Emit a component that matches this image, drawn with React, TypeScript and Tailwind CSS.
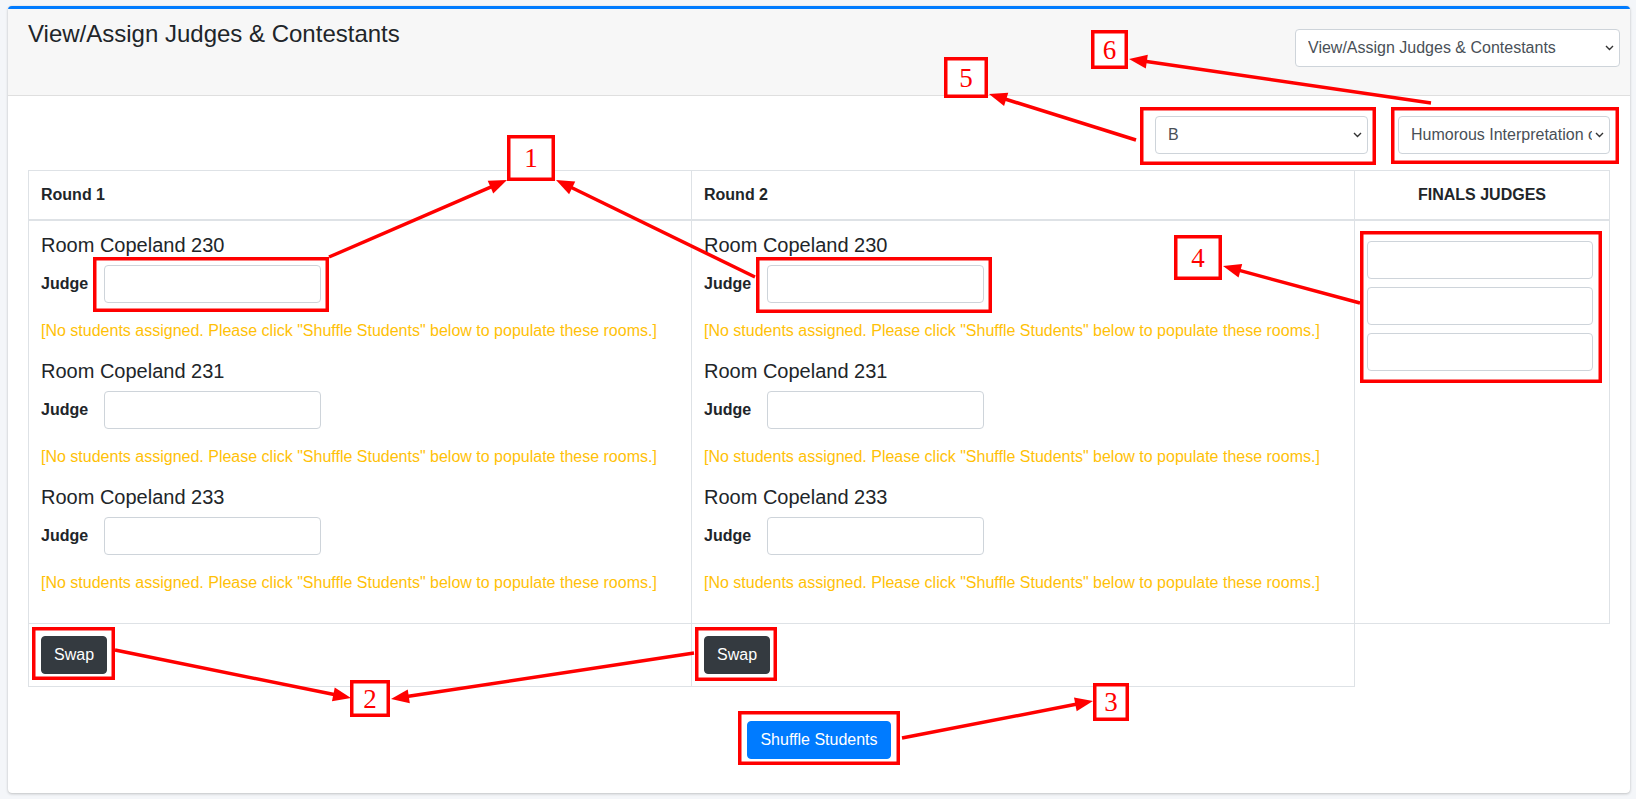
const rooms = ["Room Copeland 230", "Room Copeland 231", "Room Copeland 233"];
const rounds = ["Round 1", "Round 2"];

const warning =
  '[No students assigned. Please click "Shuffle Students" below to populate these rooms.]';

// red call-out overlay, coordinates are outer edges in page pixels
const highlights = [
  [93, 257, 329, 312],
  [756, 257, 992, 313],
  [1360, 231, 1602, 383],
  [1140, 107, 1376, 165],
  [1391, 107, 1619, 164],
  [32, 627, 115, 680],
  [695, 627, 777, 681],
  [738, 711, 900, 765],
];

const labels = [
  { n: "1", box: [507, 135, 555, 181] },
  { n: "2", box: [350, 680, 390, 717] },
  { n: "3", box: [1093, 683, 1129, 721] },
  { n: "4", box: [1174, 235, 1222, 280] },
  { n: "5", box: [944, 57, 988, 98] },
  { n: "6", box: [1091, 30, 1128, 69] },
];

const arrows = [
  { s: [329, 257], t: [507, 180] },
  { s: [755, 277], t: [556, 180] },
  { s: [1360, 303], t: [1223, 266] },
  { s: [1136, 140], t: [989, 94] },
  { s: [1431, 103], t: [1129, 59] },
  { s: [115, 650], t: [351, 698] },
  { s: [694, 653], t: [391, 699] },
  { s: [902, 738], t: [1093, 701] },
];

const SW = 3.5;

function Arrow({ s, t }: { s: number[]; t: number[] }) {
  const dx = t[0] - s[0];
  const dy = t[1] - s[1];
  const len = Math.hypot(dx, dy);
  const ux = dx / len;
  const uy = dy / len;
  const L = 18;
  const W = 14;
  const bx = t[0] - ux * L;
  const by = t[1] - uy * L;
  const px = (-uy * W) / 2;
  const py = (ux * W) / 2;
  return (
    <g>
      <line x1={s[0]} y1={s[1]} x2={bx + ux * 2} y2={by + uy * 2} stroke="#ff0000" strokeWidth={SW} />
      <polygon
        points={`${t[0]},${t[1]} ${bx + px},${by + py} ${bx - px},${by - py}`}
        fill="#ff0000"
      />
    </g>
  );
}

function Annotations() {
  return (
    <svg
      className="absolute left-0 top-0 pointer-events-none"
      width={1636}
      height={799}
      viewBox="0 0 1636 799"
    >
      {highlights.map(([x1, y1, x2, y2], i) => (
        <rect
          key={i}
          x={x1 + SW / 2}
          y={y1 + SW / 2}
          width={x2 - x1 - SW}
          height={y2 - y1 - SW}
          fill="none"
          stroke="#ff0000"
          strokeWidth={SW}
        />
      ))}
      {arrows.map((a, i) => (
        <Arrow key={i} s={a.s} t={a.t} />
      ))}
      {labels.map(({ n, box: [x1, y1, x2, y2] }) => (
        <g key={n}>
          <rect
            x={x1 + SW / 2}
            y={y1 + SW / 2}
            width={x2 - x1 - SW}
            height={y2 - y1 - SW}
            fill="#ffffff"
            stroke="#ff0000"
            strokeWidth={SW}
          />
          <text
            x={(x1 + x2) / 2}
            y={(y1 + y2) / 2 + 9}
            textAnchor="middle"
            fill="#ff0000"
            fontSize={27}
            fontFamily="'Liberation Serif', 'DejaVu Serif', serif"
          >
            {n}
          </text>
        </g>
      ))}
    </svg>
  );
}

function Chevron() {
  return (
    <svg
      className="absolute right-[6px] top-1/2 -translate-y-1/2 pointer-events-none"
      width="9"
      height="6"
      viewBox="0 0 9 6"
    >
      <polyline points="1,1 4.5,4.5 8,1" fill="none" stroke="#333" strokeWidth="1.4" />
    </svg>
  );
}

function Select({ value, className }: { value: string; className: string }) {
  return (
    <div className={`relative ${className}`}>
      <select
        defaultValue={value}
        className="appearance-none w-full h-[38px] bg-white border border-[#ced4da] rounded pl-3 pr-[17px] text-base text-[#495057] leading-6"
      >
        <option>{value}</option>
      </select>
      <Chevron />
    </div>
  );
}

function RoomBlock({ name }: { name: string }) {
  return (
    <div>
      <h5 className="text-[20px] leading-[1.2] mb-2">{name}</h5>
      <div className="flex items-center gap-4 mb-4">
        <label className="font-bold leading-6">Judge</label>
        <input
          type="text"
          className="w-[217px] h-[38px] border border-[#ced4da] rounded bg-white px-3"
        />
      </div>
      <p className="text-[#ffc107] leading-6 mb-4">{warning}</p>
    </div>
  );
}

export default function App() {
  return (
    <div className="relative min-h-[799px] bg-[#f4f6f9] text-[#212529] text-base font-['Liberation_Sans',Arial,sans-serif]">
      <div className="pt-[6px] pl-[8px]">
        <div className="w-[1622px] bg-white rounded border-t-[3px] border-t-[#007bff] shadow-[0_0_1px_rgba(0,0,0,0.125),0_1px_3px_rgba(0,0,0,0.2)]">
          <div className="h-[87px] bg-[#f7f7f7] border-b border-[#dfdfdf] px-5 flex justify-between items-start">
            <h4 className="pt-[11px] text-[24px] leading-[1.2]">View/Assign Judges &amp; Contestants</h4>
            <Select value="View/Assign Judges & Contestants" className="mt-[20px] -mr-[10px] w-[325px]" />
          </div>

          <div className="px-5 pt-5 pb-5">
            <div className="flex justify-end gap-[30px] mb-4">
              <Select value="B" className="w-[213px]" />
              <Select value="Humorous Interpretation of Literature" className="w-[212px]" />
            </div>

            <table className="w-full table-fixed border-collapse">
              <colgroup>
                <col className="w-[663px]" />
                <col className="w-[663px]" />
                <col />
              </colgroup>
              <thead>
                <tr>
                  {rounds.map((r) => (
                    <th
                      key={r}
                      className="border border-[#dee2e6] border-b-2 p-3 text-left font-bold leading-6 align-bottom"
                    >
                      {r}
                    </th>
                  ))}
                  <th className="border border-[#dee2e6] border-b-2 p-3 text-center font-bold leading-6 align-bottom">
                    FINALS JUDGES
                  </th>
                </tr>
              </thead>
              <tbody>
                <tr>
                  {rounds.map((r) => (
                    <td key={r} className="border border-[#dee2e6] p-3 align-top">
                      {rooms.map((room) => (
                        <RoomBlock key={room} name={room} />
                      ))}
                    </td>
                  ))}
                  <td className="border border-[#dee2e6] p-3 align-top">
                    {[0, 1, 2].map((i) => (
                      <input
                        key={i}
                        type="text"
                        className="block mt-2 w-[226px] h-[38px] border border-[#ced4da] rounded bg-white px-3"
                      />
                    ))}
                  </td>
                </tr>
                <tr>
                  {rounds.map((r) => (
                    <td key={r} className="border border-[#dee2e6] p-3">
                      <button className="bg-[#343a40] text-white rounded px-3 py-1.5 leading-6 border border-[#343a40]">
                        Swap
                      </button>
                    </td>
                  ))}
                </tr>
              </tbody>
            </table>

            <div className="mt-[34px] text-center">
              <button className="bg-[#007bff] text-white rounded px-3 py-1.5 leading-6 border border-[#007bff] mb-[14px]">
                Shuffle Students
              </button>
            </div>
          </div>
        </div>
      </div>
      <Annotations />
    </div>
  );
}
